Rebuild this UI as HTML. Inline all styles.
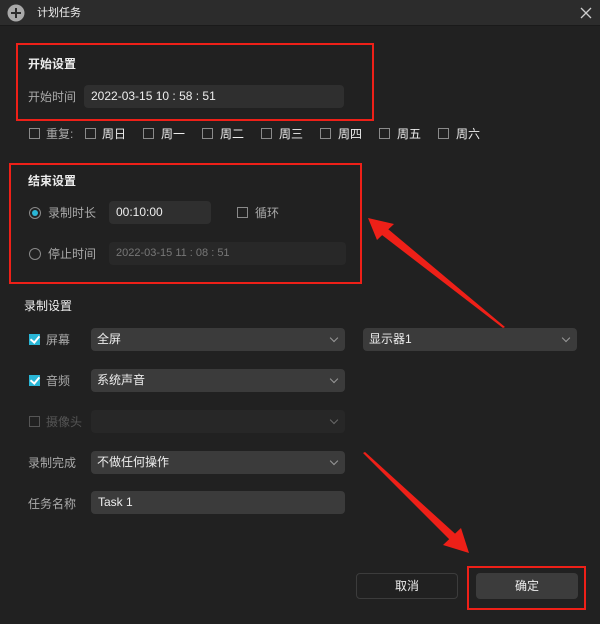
<!DOCTYPE html>
<html><head><meta charset="utf-8"><style>
*{margin:0;padding:0;box-sizing:border-box}
body{width:600px;height:624px;background:#212121;font-family:"Liberation Sans","Noto Sans CJK SC",sans-serif;font-size:12px;color:#aaa;position:relative;overflow:hidden}
.a{position:absolute;white-space:nowrap}
.t{position:absolute;line-height:14px}
.in{position:absolute;border-radius:4px;background:#2f2f2f;color:#eee;padding-left:7px;line-height:23px;height:23px}
.dd{position:absolute;border-radius:4px;background:#3b3b3b;color:#eee;padding-left:6px;line-height:23px;height:23px}
.dd:after{content:"";position:absolute;right:8px;top:7px;width:5px;height:5px;border-right:1px solid #999;border-bottom:1px solid #999;transform:rotate(45deg)}
.cb{position:absolute;width:11px;height:11px;border:1px solid #8a8a8a}
.cbc{position:absolute;width:11px;height:11px;background:#29b6d6}
.cbc:after{content:"";position:absolute;left:3px;top:0px;width:4px;height:7px;border-right:2px solid #fff;border-bottom:2px solid #fff;transform:rotate(40deg)}
.rb{position:absolute;border:2px solid #ee2018}
.w{color:#eee}
</style></head><body>
<div class="a" style="left:0;top:0;width:600px;height:26px;background:#2c2c2c;border-bottom:1px solid #1a1a1a"></div>
<svg class="a" style="left:7px;top:4px" width="18" height="18"><circle cx="9" cy="9" r="8.5" fill="#a9a9a9"/><path d="M9 4v10M4 9h10" stroke="#2c2c2c" stroke-width="2"/></svg>
<div class="t w" style="left:37px;top:6px;font-size:11px">计划任务</div>
<svg class="a" style="left:579px;top:6px" width="14" height="14"><path d="M2 2L12 12M12 2L2 12" stroke="#ccc" stroke-width="1.3"/></svg>

<div class="rb" style="left:16px;top:43px;width:358px;height:78px"></div>
<div class="t w" style="left:28px;top:57px;font-weight:bold">开始设置</div>
<div class="t" style="left:28px;top:90px">开始时间</div>
<div class="in" style="left:84px;top:85px;width:260px">2022-03-15 10 : 58 : 51</div>

<div class="cb" style="left:29px;top:128px"></div><div class="t" style="left:46px;top:127px">重复:</div>
<div class="cb" style="left:85px;top:128px"></div><div class="t w" style="left:102px;top:127px">周日</div>
<div class="cb" style="left:143px;top:128px"></div><div class="t w" style="left:161px;top:127px">周一</div>
<div class="cb" style="left:202px;top:128px"></div><div class="t w" style="left:220px;top:127px">周二</div>
<div class="cb" style="left:261px;top:128px"></div><div class="t w" style="left:279px;top:127px">周三</div>
<div class="cb" style="left:320px;top:128px"></div><div class="t w" style="left:338px;top:127px">周四</div>
<div class="cb" style="left:379px;top:128px"></div><div class="t w" style="left:397px;top:127px">周五</div>
<div class="cb" style="left:438px;top:128px"></div><div class="t w" style="left:456px;top:127px">周六</div>

<div class="rb" style="left:9px;top:163px;width:353px;height:121px"></div>
<div class="t w" style="left:28px;top:174px;font-weight:bold">结束设置</div>
<div class="a" style="left:29px;top:207px;width:12px;height:12px;border:1px solid #8a8a8a;border-radius:50%"><div style="position:absolute;left:2px;top:2px;width:6px;height:6px;border-radius:50%;background:#29b6d6"></div></div>
<div class="t" style="left:48px;top:206px">录制时长</div>
<div class="in" style="left:109px;top:201px;width:102px">00:10:00</div>
<div class="cb" style="left:237px;top:207px"></div><div class="t" style="left:255px;top:206px">循环</div>
<div class="a" style="left:29px;top:248px;width:12px;height:12px;border:1px solid #8a8a8a;border-radius:50%"></div>
<div class="t" style="left:48px;top:247px">停止时间</div>
<div class="in" style="left:109px;top:242px;width:237px;background:#282828;color:#777;font-size:11px">2022-03-15 11 : 08 : 51</div>

<div class="t w" style="left:24px;top:299px">录制设置</div>
<div class="cbc" style="left:29px;top:334px"></div><div class="t" style="left:46px;top:333px">屏幕</div>
<div class="dd" style="left:91px;top:328px;width:254px">全屏</div>
<div class="dd" style="left:363px;top:328px;width:214px">显示器1</div>
<div class="cbc" style="left:29px;top:375px"></div><div class="t" style="left:46px;top:374px">音频</div>
<div class="dd" style="left:91px;top:369px;width:254px">系统声音</div>
<div class="cb" style="left:29px;top:416px;border-color:#555"></div><div class="t" style="left:46px;top:415px;color:#555">摄像头</div>
<div class="dd" style="left:91px;top:410px;width:254px;background:#2b2b2b;opacity:.6"></div>
<div class="t" style="left:28px;top:456px">录制完成</div>
<div class="dd" style="left:91px;top:451px;width:254px">不做任何操作</div>
<div class="t" style="left:28px;top:497px">任务名称</div>
<div class="in" style="left:91px;top:491px;width:254px;background:#3b3b3b">Task 1</div>

<div class="a" style="left:356px;top:573px;width:102px;height:26px;border:1px solid #3c3c3c;border-radius:4px;text-align:center;line-height:24px;color:#eee">取消</div>
<div class="a" style="left:476px;top:573px;width:102px;height:26px;background:#3c3c3c;border-radius:4px;text-align:center;line-height:26px;color:#eee">确定</div>
<div class="rb" style="left:467px;top:566px;width:119px;height:44px"></div>

<svg class="a" style="left:0;top:0" width="600" height="624">
<polygon points="505,327 503,328 378,232 382,224" fill="#ee2018"/>
<polygon points="368,218 394,224 377,240" fill="#ee2018"/>
<polygon points="363,453 365,452 462,540 456,546" fill="#ee2018"/>
<polygon points="469,553 443,545 461,528" fill="#ee2018"/>
</svg>
</body></html>
